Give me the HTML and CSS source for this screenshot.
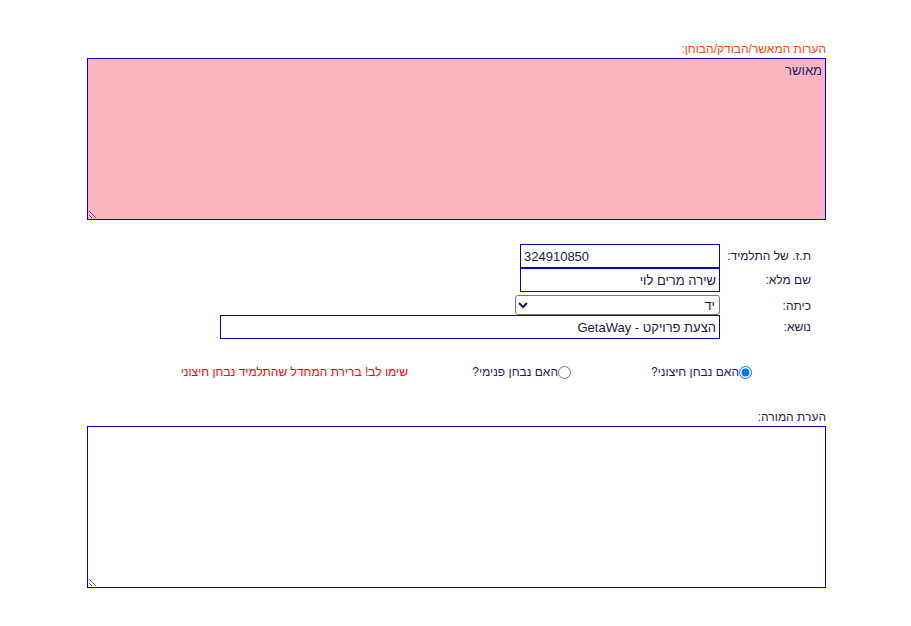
FILE: index.html
```html
<!DOCTYPE html>
<html lang="he" dir="rtl">
<head>
<meta charset="utf-8">
<link rel="stylesheet" href="styles.css">
</head>
<body>
<div class="page">
  <div class="field-label orange">הערות המאשר/הבודק/הבוחן:</div>
  <textarea class="notes pink">מאושר</textarea>

  <div class="form-grid">
    <div class="lbl">ת.ז. של התלמיד:</div>
    <div class="ctl"><input class="inp w200 ltr" type="text" value="324910850"></div>
    <div class="lbl">שם מלא:</div>
    <div class="ctl"><input class="inp w200" type="text" value="שירה מרים לוי"></div>
    <div class="lbl lbl-sel">כיתה:</div>
    <div class="ctl"><select class="sel"><option>יד</option></select></div>
    <div class="lbl">נושא:</div>
    <div class="ctl"><input class="inp w500" type="text" value="הצעת פרויקט - GetaWay"></div>
  </div>

  <div class="radio-row">
    <label class="radio-cell"><input type="radio" name="ex" checked>האם נבחן חיצוני?</label>
    <label class="radio-cell"><input type="radio" name="ex">האם נבחן פנימי?</label>
    <div class="warn">שימו לב! ברירת המחדל שהתלמיד נבחן חיצוני</div>
  </div>

  <div class="field-label navy teacher">הערת המורה:</div>
  <textarea class="notes"></textarea>
</div>
</body>
</html>
```
FILE: styles.css
```css
html, body {
  margin: 0;
  padding: 0;
  background: #fff;
}
body {
  font-family: "Liberation Sans", Arial, sans-serif;
  font-size: 12px;
  color: #1a1a40;
}
.page {
  width: 739px;
  margin: 0 85px 0 auto;
  padding-top: 42px;
}
.field-label {
  line-height: 15px;
  height: 16px;
}
.orange { color: #ff4500; }
.navy { color: #191970; }
.notes {
  display: block;
  box-sizing: border-box;
  width: 739px;
  height: 162px;
  margin: 0;
  border: 1px solid #0000cd;
  padding: 4px 3px 2px;
  font-family: "Liberation Sans", Arial, sans-serif;
  font-size: 13px;
  color: #191970;
  background: #fff;
  resize: both;
  outline: none;
}
.pink { background: #ffb6c1; }
.form-grid {
  display: grid;
  grid-template-columns: 106px 1fr;
  grid-template-rows: 24px 24px 23px 24px;
  margin-top: 24px;
}
.lbl {
  padding-right: 15px;
  display: flex;
  align-items: center;
  color: #1a1a40;
}
.lbl-sel {
  padding-top: 4px;
}
.ctl {
  display: flex;
  align-items: flex-start;
}
.inp {
  box-sizing: border-box;
  height: 24px;
  margin: 0;
  border: 1px solid #0000cd;
  padding: 1px 3px;
  font-family: "Liberation Sans", Arial, sans-serif;
  font-size: 13px;
  color: #1a1a40;
  background: #fff;
  outline: none;
}
.ltr { text-align: left; direction: ltr; }
.w200 { width: 200px; }
.w500 { width: 500px; }
.sel {
  box-sizing: border-box;
  width: 205px;
  height: 20px;
  margin: 3px 0 0 0;
  border: 1px solid #767676;
  border-radius: 3px;
  font-family: "Liberation Sans", Arial, sans-serif;
  font-size: 13px;
  color: #1a1a40;
  background: #fff;
}
.radio-row {
  display: grid;
  grid-template-columns: 181px 163px 1fr;
  padding-right: 74px;
  margin-top: 25px;
  height: 16px;
  align-items: center;
}
.radio-cell {
  display: flex;
  align-items: center;
  color: #191970;
}
.radio-cell input {
  margin: 0;
  width: 13px;
  height: 13px;
}
.warn {
  color: #ff0000;
}
.teacher {
  margin-top: 30px;
  height: 16px;
}
```
